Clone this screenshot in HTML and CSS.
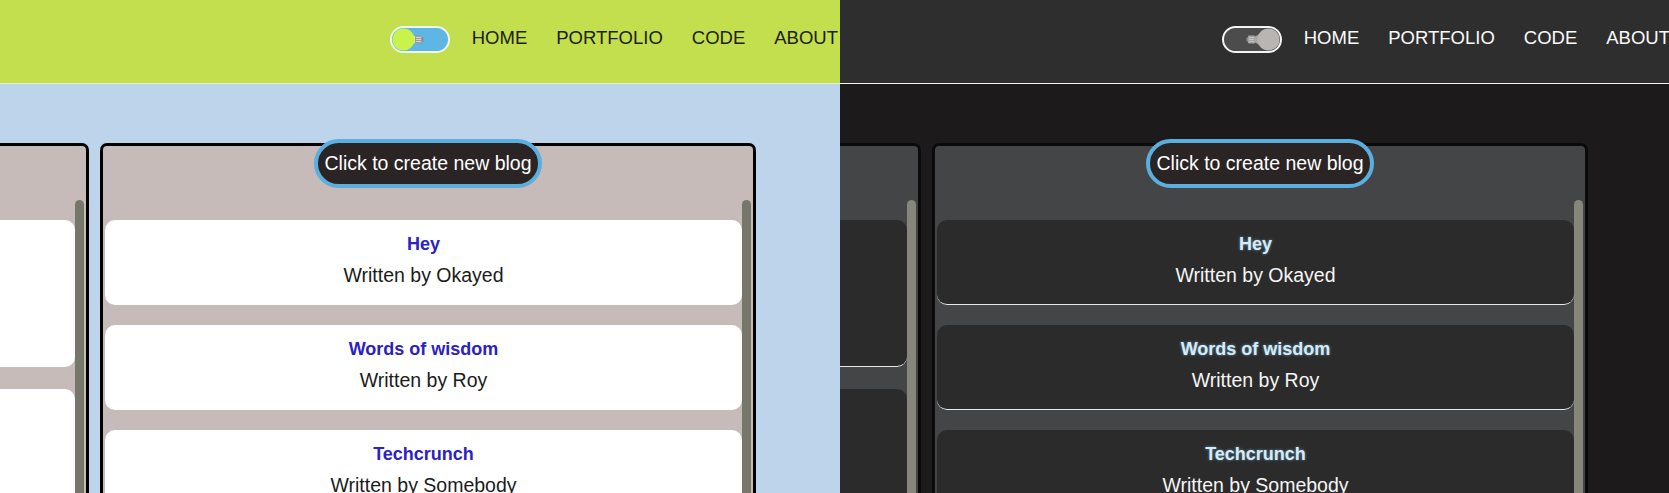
FILE: index.html
```html
<!DOCTYPE html>
<html lang="en">
<head>
<meta charset="utf-8">
<title>Blogs</title>
<link rel="stylesheet" href="styles.css">
</head>
<body>
  <div class="pane pane-left">
    <div class="page light">
      <header class="topbar">
        <svg class="toggle" width="60" height="27" viewBox="0 0 60 27">
          <rect x="1" y="1" width="58" height="25" rx="12.5" fill="#5eb6e4" stroke="#eef7ee" stroke-width="2"/>
          <path d="M21.5 7.5 Q23.5 10 26 10.5 V16.5 Q23.5 17 21.5 19.5 Z" fill="#d6e6cf"/>
          <circle cx="13.5" cy="13.5" r="11" fill="#c9f24b"/>
          <rect x="25" y="9.5" width="7" height="8" rx="1" fill="#9d9d9d"/>
          <path d="M26 11.5h5M26 13.5h5M26 15.5h5" stroke="#e2e2e2" stroke-width="0.8"/>
          <rect x="32" y="11.5" width="1.5" height="4" fill="#8a8a8a"/>
        </svg>
        <nav class="nav">
          <a href="#">HOME</a>
          <a href="#">PORTFOLIO</a>
          <a href="#">CODE</a>
          <a href="#">ABOUT</a>
        </nav>
      </header>
      <main class="board">
        <section class="col col-first">
          <div class="col-head"></div>
          <div class="scroller">
            <div class="list">
              <article class="card card-tall"></article>
              <article class="card card-tall"></article>
              <article class="card card-tall"></article>
            </div>
            <div class="rail"><div class="thumb"></div></div>
          </div>
        </section>
        <section class="col">
          <button class="newbtn">Click to create new blog</button>
          <div class="scroller">
            <div class="list">
              <article class="card"><h3>Hey</h3><p>Written by Okayed</p></article>
              <article class="card"><h3>Words of wisdom</h3><p>Written by Roy</p></article>
              <article class="card"><h3>Techcrunch</h3><p>Written by Somebody</p></article>
            </div>
            <div class="rail"><div class="thumb"></div></div>
          </div>
        </section>
      </main>
    </div>
  </div>
  <div class="pane pane-right">
    <div class="page dark">
      <header class="topbar">
        <svg class="toggle" width="60" height="27" viewBox="0 0 60 27">
          <rect x="1" y="1" width="58" height="25" rx="12.5" fill="#4c4c4c" stroke="#f4f4f4" stroke-width="2"/>
          <path d="M38.5 7 Q35 10 33 10.5 V16.5 Q35 17 38.5 20 Z" fill="#a9a7a5"/>
          <circle cx="46.5" cy="13.5" r="11" fill="#b8b5b2"/>
          <rect x="26" y="9.5" width="7" height="8" rx="1" fill="#a3a3a3"/>
          <path d="M27 11.5h5M27 13.5h5M27 15.5h5" stroke="#cdcdcd" stroke-width="0.8"/>
          <rect x="24.5" y="11.5" width="1.5" height="4" fill="#8d8d8d"/>
        </svg>
        <nav class="nav">
          <a href="#">HOME</a>
          <a href="#">PORTFOLIO</a>
          <a href="#">CODE</a>
          <a href="#">ABOUT</a>
        </nav>
      </header>
      <main class="board">
        <section class="col col-first">
          <div class="col-head"></div>
          <div class="scroller">
            <div class="list">
              <article class="card card-tall"></article>
              <article class="card card-tall"></article>
              <article class="card card-tall"></article>
            </div>
            <div class="rail"><div class="thumb"></div></div>
          </div>
        </section>
        <section class="col">
          <button class="newbtn">Click to create new blog</button>
          <div class="scroller">
            <div class="list">
              <article class="card"><h3>Hey</h3><p>Written by Okayed</p></article>
              <article class="card"><h3>Words of wisdom</h3><p>Written by Roy</p></article>
              <article class="card"><h3>Techcrunch</h3><p>Written by Somebody</p></article>
            </div>
            <div class="rail"><div class="thumb"></div></div>
          </div>
        </section>
      </main>
    </div>
  </div>
</body>
</html>
```

FILE: styles.css
```css
* { box-sizing: border-box; }

html, body {
  margin: 0;
  padding: 0;
}

body {
  width: 1669px;
  height: 493px;
  overflow: hidden;
  display: flex;
  font-family: "Liberation Sans", Arial, sans-serif;
}

.pane {
  height: 493px;
  overflow: hidden;
}

.pane-left {
  width: 840px;
  flex: none;
}

.pane-right {
  flex: 1;
}

.page {
  width: 840px;
  height: 493px;
  display: flex;
  flex-direction: column;
}

.pane-right .page {
  margin-left: -8px;
}

/* ---------- header ---------- */
.topbar {
  height: 84px;
  flex: none;
  display: flex;
  align-items: center;
  justify-content: flex-end;
  padding: 0 2px 4px 0;
  border-bottom: 1px solid #fff;
}

.toggle {
  display: block;
  flex: none;
  margin-right: 22px;
}

.nav {
  display: flex;
  align-items: center;
  gap: 29px;
}

.nav a {
  font-size: 18.5px;
  line-height: 1;
  margin-bottom: 3px;
  text-decoration: none;
}

/* ---------- board ---------- */
.board {
  flex: 1;
  overflow: hidden;
  display: flex;
  gap: 11px;
  padding-top: 59px;
}

.col {
  flex: none;
  width: 656px;
  height: 420px;
  border: 3px solid #000;
  border-radius: 7px;
  display: flex;
  flex-direction: column;
  align-items: center;
}

.col-first {
  margin-left: -567px;
}

.col-head {
  flex: none;
  height: 42px;
}

.newbtn {
  flex: none;
  margin-top: -7px;
  height: 49px;
  padding: 0 6px;
  border: 4px solid #5aafdf;
  border-radius: 25px;
  background: #2b2424;
  color: #fff;
  font-family: "Liberation Sans", Arial, sans-serif;
  font-size: 19.5px;
  display: flex;
  align-items: center;
  cursor: pointer;
}

.scroller {
  align-self: stretch;
  flex: 1;
  min-height: 0;
  margin-top: 12px;
  display: flex;
  overflow: hidden;
}

.list {
  flex: 1;
  min-width: 0;
  padding: 20px 0 0 2px;
}

.rail {
  flex: none;
  width: 11px;
  padding-right: 2px;
}

.thumb {
  height: 480px;
  border-radius: 5px;
}

.card {
  height: 85px;
  margin-bottom: 20px;
  border-radius: 10px;
  text-align: center;
  padding-top: 10px;
}

.card-tall {
  height: 147px;
  margin-bottom: 22px;
}

.card h3 {
  margin: 0;
  font-size: 18px;
  font-weight: bold;
  line-height: 28px;
}

.card p {
  margin: 2px 0 0;
  font-size: 19.5px;
  line-height: 30px;
}

/* ---------- light theme ---------- */
.light {
  background: #bdd4ea;
}

.light .topbar {
  background: #c3df4d;
  border-bottom-color: #e3edd4;
}

.light .nav a {
  color: #1c1c12;
}

.light .col {
  background: #c7bbba;
}

.light .thumb {
  background: #76776a;
}

.light .card {
  background: #fff;
}

.light .card h3 {
  color: #2b21c4;
}

.light .card p {
  color: #1b1b1b;
}

/* ---------- dark theme ---------- */
.dark {
  background: #1c1a1b;
}

.dark .topbar {
  background: #2e2e2e;
  border-bottom-color: #f2f2f2;
}

.dark .nav a {
  color: #fafafa;
}

.dark .col {
  background: #444547;
  border-color: #0a0a0a;
}

.dark .thumb {
  background: #86877a;
}

.dark .card {
  background: #2b2b2b;
  border-bottom: 1px solid #e8e8e8;
}

.dark .card h3 {
  color: #d6ebf7;
  text-shadow: 0 0 3px rgba(120, 190, 230, 0.7);
}

.dark .card p {
  color: #f5f5f5;
}
```
